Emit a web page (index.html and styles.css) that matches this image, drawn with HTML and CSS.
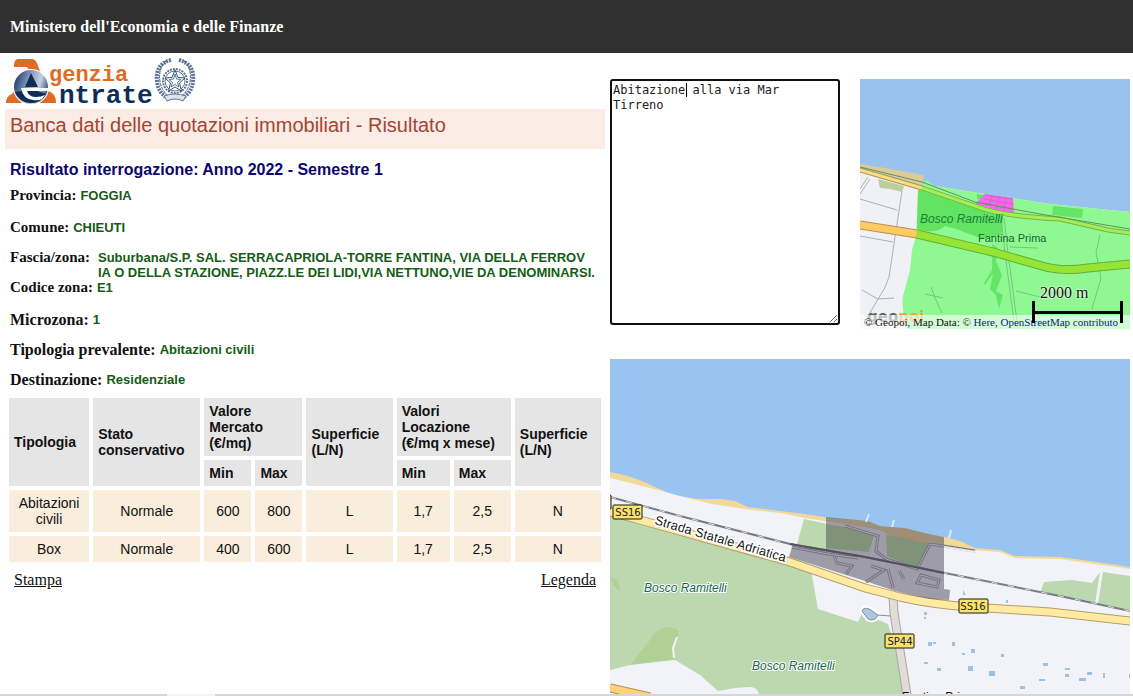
FILE: index.html
```html
<!DOCTYPE html>
<html lang="it">
<head>
    <meta charset="UTF-8">
    <meta name="viewport" content="width=device-width, initial-scale=1.0">
    <title>Banca dati delle quotazioni immobiliari - Risultato</title>
    <link rel="stylesheet" href="styles.css">
</head>
<body>
    <header class="top-bar">Ministero dell'Economia e delle Finanze</header>

    <main class="page">
        <section class="result">
            <svg class="logo" viewBox="5 55 195 54" role="img" aria-label="Agenzia Entrate">
                <defs>
                    <linearGradient id="ball" x1="0" y1="0.2" x2="1" y2="0.5">
                        <stop offset="0" stop-color="#173963"/>
                        <stop offset="0.4" stop-color="#7e95b5"/>
                        <stop offset="0.75" stop-color="#c5d1e0"/>
                        <stop offset="1" stop-color="#3d5c86"/>
                    </linearGradient>
                </defs>
                <path class="logo-orange" d="M18 59H32Q36 59 38 66L48 91Q56 93 56 103H40L30 71L27 67H14Q14 59 18 59ZM6 103Q6 96 12 94L18 86L22 103Z"/>
                <circle cx="31" cy="87" r="18" fill="#fff"/>
                <circle cx="31" cy="87" r="17" fill="url(#ball)"/>
                <path d="M15 92A17 17 0 0 0 46 94L38 91H22Z" fill="#0f2d57"/>
                <path d="M31 73L38 87H25Z" fill="#0f2d57"/>
                <path d="M21 88H48V91H27Q29 97 36 97Q41 97 45 95L42 99Q38 101 33 100Q23 99 21 88Z" fill="#fff"/>
                <text class="logo-agenzia" x="49" y="81">genzia</text>
                <text class="logo-entrate" x="59" y="103">ntrate</text>
                <g fill="none" stroke="#5c7694">
                    <circle cx="175" cy="81" r="12" stroke-width="2" stroke-dasharray="2 1"/>
                    <circle cx="175" cy="81" r="10"/>
                    <path d="M175 70L178 77.500L185 78L179.500 83L181.500 91L175 87L168.500 91L170.500 83L165 78L172 77.500Z" stroke="#344f72" fill="#fff"/>
                    <path d="M175 74L176.500 79L181 79.500L177.500 82.500L179 87L175 84.500L171 87L172.500 82.500L169 79.500L173.500 79Z"/>
                    <path d="M171 60Q155 64 157 81Q158 93 168 98M179 60Q195 64 193 81Q192 93 182 98" stroke-width="4" stroke-dasharray="2 1"/>
                    <path d="M166 61Q158 68 160 82Q162 92 171 98M184 61Q192 68 190 82Q188 92 179 98" stroke="#344f72" stroke-dasharray="3 1"/>
                    <path d="M164 96Q175 92 186 96L183 101Q175 97 167 101Z" fill="#dce4ed"/>
                </g>
            </svg>

            <h1 class="title">Banca dati delle quotazioni immobiliari - Risultato</h1>
            <h2 class="query">Risultato interrogazione: Anno 2022 - Semestre 1</h2>

            <dl class="details">
                <div class="detail"><dt>Provincia:</dt><dd>FOGGIA</dd></div>
                <div class="detail wide"><dt>Comune:</dt><dd>CHIEUTI</dd></div>
                <div class="detail zone">
                    <dt>Fascia/zona:</dt>
                    <dd>Suburbana/S.P. SAL. SERRACAPRIOLA-TORRE FANTINA, VIA DELLA FERROV<br>IA O DELLA STAZIONE, PIAZZ.LE DEI LIDI,VIA NETTUNO,VIE DA DENOMINARSI.</dd>
                </div>
                <div class="detail code"><dt>Codice zona:</dt><dd>E1</dd></div>
                <div class="detail large wide"><dt>Microzona:</dt><dd>1</dd></div>
                <div class="detail large"><dt>Tipologia prevalente:</dt><dd>Abitazioni civili</dd></div>
                <div class="detail large"><dt>Destinazione:</dt><dd>Residenziale</dd></div>
            </dl>

            <table class="quotes">
                <colgroup>
                    <col class="col-type"><col class="col-state">
                    <col class="col-sale"><col class="col-sale"><col class="col-area">
                    <col class="col-rent-min"><col class="col-rent-max"><col class="col-area">
                </colgroup>
                <thead>
                    <tr>
                        <th rowspan="2">Tipologia</th>
                        <th rowspan="2">Stato conservativo</th>
                        <th colspan="2">Valore<br>Mercato<br>(€/mq)</th>
                        <th rowspan="2">Superficie (L/N)</th>
                        <th colspan="2">Valori<br>Locazione<br>(€/mq x mese)</th>
                        <th rowspan="2">Superficie (L/N)</th>
                    </tr>
                    <tr>
                        <th>Min</th>
                        <th>Max</th>
                        <th>Min</th>
                        <th>Max</th>
                    </tr>
                </thead>
                <tbody>
                    <tr>
                        <td>Abitazioni civili</td>
                        <td>Normale</td>
                        <td>600</td>
                        <td>800</td>
                        <td>L</td>
                        <td>1,7</td>
                        <td>2,5</td>
                        <td>N</td>
                    </tr>
                    <tr>
                        <td>Box</td>
                        <td>Normale</td>
                        <td>400</td>
                        <td>600</td>
                        <td>L</td>
                        <td>1,7</td>
                        <td>2,5</td>
                        <td>N</td>
                    </tr>
                </tbody>
            </table>

            <nav class="links">
                <a href="#stampa">Stampa</a>
                <a href="#legenda">Legenda</a>
            </nav>
        </section>

        <section class="side">
            <div class="side-top">
                <div class="notes-box">
                    <textarea class="notes" aria-label="Note" spellcheck="false">Abitazione alla via Mar Tirreno</textarea>
                    <i class="caret"></i>
                </div>

                <div class="mini-map">
                    <svg viewBox="860 79 270 250" preserveAspectRatio="xMinYMin slice" aria-label="Mappa della zona">
                        <rect x="860" y="79" width="270" height="250" fill="#99c2ef"/>
                        <path d="M860 166L922 176V185L935 186L985 194L1050 204L1130 212V329H860Z" fill="#f0f1f6"/>
                        <path d="M860 164L885 168L924 175L922 189L860 171Z" fill="#dccb97"/>
                        <path d="M860 166L900 176L922 187L860 171Z" fill="#cbcfaa"/>
                        <path d="M878 179L904 186L902 192L890 189L880 188Z" fill="#bccf9b"/>
                        <path d="M924 183L926 180L935 186L985 194L1050 204L1130 212V329H908Q901 311 903 296L910 270L912 250L916 236L918 192Z" fill="#90f892"/>
                        <path d="M918 190L940 192L985 210L1003 215L1002 232Q998 239 980 238L956 229L945 226Q935 235 917 229Z" fill="#62e462"/>
                        <path d="M1053 206L1083 209L1082 218L1052 215ZM977 194L985 195L984 200L977 199Z" fill="#65e565"/>
                        <path d="M992 244L998 248L996 261L1002 275L996 291L1003 295L999 309L996 295L990 289L993 273L985 285L984 283L992 270Z" fill="#65e568"/>
                        <g fill="none" stroke="#a9b0b3">
                            <path d="M860 199L897 210M860 236L893 242M902 191L889 277Q886 288 878 299L862 290M878 299L894 298M878 299L867 318M870 179L860 194M868 177L860 189"/>
                            <path d="M1004 218L1008 253L1018 329M1001 218L1005 253L1015 329M1100 235L1096 253L1101 278L1092 309M1016 291L1040 297M1010 247L1038 248M931 287L935 298L942 313M925 294L943 298" stroke="#71c777"/>
                        </g>
                        <path d="M985 194L1013 198L1014 213L1000 211L975 204Z" fill="#ee6be5"/>
                        <path d="M985 195L1012 199M984 199L1013 204M982 203L1012 209M992 195L989 205M999 196L996 209M1006 198L1004 211" stroke="#d95fce" fill="none"/>
                        <path d="M860 170L922 188" fill="none" stroke="#a99254" stroke-width="5"/>
                        <path d="M860 170L922 188" fill="none" stroke="#f9de82" stroke-width="3"/>
                        <path d="M922 188L978 207Q1000 216 1060 219L1108 230L1130 233" fill="none" stroke="#6eb64b" stroke-width="5"/>
                        <path d="M922 188L978 207Q1000 216 1060 219L1108 230L1130 233" fill="none" stroke="#a8ec55" stroke-width="3"/>
                        <path d="M860 167L922 182L975 202L1040 214L1130 229" fill="none" stroke="#62935d"/>
                        <path d="M860 225L917 234" fill="none" stroke="#bb8c54" stroke-width="9"/>
                        <path d="M860 225L917 234" fill="none" stroke="#fccb62" stroke-width="7"/>
                        <path d="M917 234L993 252L1042 266Q1062 272 1088 268L1130 264" fill="none" stroke="#65ad38" stroke-width="9"/>
                        <path d="M917 234L993 252L1042 266Q1062 272 1088 268L1130 264" fill="none" stroke="#96e535" stroke-width="7"/>
                        <text class="mini-place wood" x="920" y="223">Bosco Ramitelli</text>
                        <text class="mini-place" x="978" y="242">Fantina Prima</text>
                        <text class="brand" x="867" y="322">geo<tspan class="brand-end">poi</tspan></text>
                    </svg>
                    <p class="credits">© Geopoi, Map Data: © <a href="#here">Here</a>, <a href="#osm">OpenStreetMap contributo</a></p>
                    <div class="scale"><span>2000 m</span><i class="scale-bar"></i></div>
                </div>
            </div>

            <svg class="map" viewBox="610 359 520 335" preserveAspectRatio="xMinYMin slice" aria-label="Mappa di dettaglio">
                <rect x="610" y="359" width="520" height="335" fill="#99c3f0"/>
                <path d="M610 472L620 474Q640 479 655 487L676 496L700 499L722 499L735 501L748 507L780 511L805 514L830 518L868 521L880 526L905 528L925 533L945 537L960 541L975 548L1000 550L1015 556L1060 557L1090 561L1130 567V694H610Z" fill="#f0d999"/>
                <path d="M610 478Q640 485 680 496L712 504L745 509L780 513L805 518L870 528L945 545L975 550L1000 552L1015 558L1060 559L1130 569V694H610Z" fill="#f2f3f8"/>

                <path d="M610 516L640 524L790 565L811 570L818 609L858 622L862 613L888 624L894 643L907 694H759Q757 687 750 687L735 688L718 691L700 675L675 660L630 665L610 670Z" fill="#bbd8ae"/>
                <path d="M630 665L648 643Q656 628 668 627Q681 628 678 635L673 649L675 659L643 663ZM610 577L617 580L621 592L613 585Z" fill="#b0d095"/>
                <path d="M674 658L673 648L677 637" fill="none" stroke="#f4f5ef" stroke-width="2"/>
                <path d="M804 519L827 524V550L797 544ZM1040 593L1044 582L1072 580L1092 583L1100 572L1095 604ZM1103 572L1130 576V611L1098 604Z" fill="#bbd8ae"/>

                <g fill="none">
                    <path d="M893 597L894 613L901 657L907 695" stroke="#aaa6a5" stroke-width="9"/>
                    <path d="M893 597L894 613L901 657L907 695" stroke="#e1dcd7" stroke-width="7"/>
                    <path d="M610 512L640 520L790 562L865 588L900 597Q930 604 970 607L1050 612L1130 621" stroke="#b69c6a" stroke-width="9"/>
                    <path d="M610 512L640 520L790 562L865 588L900 597Q930 604 970 607L1050 612L1130 621" stroke="#feeaa0" stroke-width="7"/>
                    <path d="M610 688L650 697" stroke="#b98d5b" stroke-width="9"/>
                    <path d="M610 688L650 697" stroke="#fdd27a" stroke-width="7"/>
                    <path d="M610 497L680 516L790 544L865 557L965 577L1060 596L1130 611" stroke="#787c84" stroke-width="2"/>
                    <path d="M610 497L680 516L790 544L865 557L965 577L1060 596L1130 611" stroke="#dcdfe5" stroke-dasharray="6 11"/>
                </g>

                <!-- centro abitato -->
                <path d="M826 517L868 521L880 526L905 528L925 533L944 537V589L950 590L949 600L930 599L895 591L862 580L789 557L792 547L826 549Z" fill="#514d5f" fill-opacity="0.52"/>
                <path d="M827 524L845 527L874 535L869 552L827 548ZM886 535L903 536L929 543L917 569L887 556Z" fill="#7f9379"/>
                <path d="M882 531L911 535L930 541L923 543L887 534Z" fill="#a58c70"/>
                <g fill="none" stroke="#77727f" stroke-width="3">
                    <path d="M845 526L878 536L876 551L886 559L917 569L930 544L975 551M792 547L828 554L858 558M834 556L837 563L852 566L846 574M871 566L884 570L866 582M888 569L893 588M921 575L939 580L937 587L917 583ZM899 571L904 579"/>
                </g>
                <g fill="none" stroke="#a8a4af">
                    <path d="M845 526L878 536L876 551L886 559L917 569L930 544L975 551M792 547L828 554L858 558M834 556L837 563L852 566L846 574M871 566L884 570L866 582M888 569L893 588M921 575L939 580L937 587L917 583ZM899 571L904 579"/>
                </g>
                <path d="M944 547L976 552" fill="none" stroke="#e9eaee" stroke-width="2"/>
                <path d="M790 544L865 557L915 567L944 573" fill="none" stroke="#54525f" stroke-width="2"/>
                <path d="M866 522L869 514M892 527L894 520M949 538L951 530" stroke="#d8edf4" stroke-width="2"/>

                <path d="M862 611Q864 606 871 610L878 615Q875 622 868 619Z" fill="#aac8df" stroke="#fff" stroke-width="5"/>
                <path d="M878 615L890 616M862 611Q864 606 871 610L878 615Q875 622 868 619Z" fill="#aac8df" stroke="#858b91"/>
                <path d="M924 612h3v3h-3zM924 617h2v2h-2zM928 642h4v4h-4zM933 642h3v2h-3zM952 642h3v4h-3zM962 653h3v2h-3zM971 649h4v4h-4zM1001 654h3v3h-3zM924 662h4v2h-4zM937 668h4v3h-4zM968 666h5v5h-5zM989 671h6v5h-6zM1020 686h5v3h-5zM1043 663h5v3h-5zM1039 679h6v2h-6zM1065 668h5v2h-5zM1065 674h4v3h-4zM1079 678h7v3h-7zM1087 672h5v3h-5zM1103 673h2v5h-2zM963 590l3 5h-3zM1006 600h2v3h-2zM1129 674h2v4h-2z" fill="#9dc2e1"/>

                <g class="place">
                    <text x="644" y="592">Bosco Ramitelli</text>
                    <text x="752" y="670">Bosco Ramitelli</text>
                </g>
                <path id="road" d="M654 524L805 568" fill="none"/>
                <text class="road-name"><textPath href="#road">Strada Statale Adriatica</textPath></text>
                <g fill="#fbe36b" stroke="#181815">
                    <rect x="606" y="495" width="5" height="14" rx="1"/>
                    <rect x="613" y="505" width="29" height="14" rx="1"/>
                    <rect x="959" y="599" width="29" height="14" rx="1"/>
                    <rect x="885" y="634" width="29" height="14" rx="1"/>
                </g>
                <g class="shield">
                    <text x="628" y="516">SS16</text>
                    <text x="973" y="610">SS16</text>
                    <text x="900" y="645">SP44</text>
                </g>
                <text class="town" x="902" y="701">Fantina Prima</text>
            </svg>
        </section>
    </main>

    <div class="scroll-track"><div class="scroll-thumb"></div></div>
</body>
</html>
```
FILE: styles.css
```css
* {
    margin: 0;
    padding: 0;
    box-sizing: border-box;
}

body {
    font-family: "Liberation Serif", "Times New Roman", serif;
    font-size: 16px;
    color: #111;
    background: #fff;
    height: 100vh;
    display: flex;
    flex-direction: column;
    overflow: hidden;
}

.top-bar {
    background: #303030;
    color: #fff;
    font-weight: bold;
    line-height: 19px;
    padding: 17px 10px;
}

.page {
    flex: 1;
    min-height: 0;
    display: grid;
    grid-template-columns: minmax(0, 600fr) minmax(0, 520fr);
    gap: 5px;
    padding: 0 3px 0 5px;
}

.result {
    padding-top: 2px;
}

.logo {
    display: block;
    width: 195px;
    height: 54px;
}

.logo-orange {
    fill: #df6c24;
}

.logo-agenzia,
.logo-entrate {
    font-family: "Liberation Mono", "Courier New", monospace;
    font-weight: bold;
}

.logo-agenzia {
    font-size: 22px;
    fill: #df6c24;
}

.logo-entrate {
    font-size: 26px;
    fill: #102d59;
}

.title {
    background: #fbece5;
    color: #a34535;
    font-family: "Liberation Sans", Arial, sans-serif;
    font-size: 20px;
    font-weight: normal;
    line-height: 24px;
    padding: 4px 5px 12px;
}

.query {
    color: #0b0670;
    font-family: "Liberation Sans", Arial, sans-serif;
    font-size: 16px;
    line-height: 20px;
    padding: 11px 5px 8px;
}

.details {
    display: flex;
    flex-direction: column;
    gap: 15px;
    padding: 0 5px 7px;
}

.detail {
    display: flex;
    gap: 4px;
    font-size: 15px;
    line-height: 15px;
}

.detail dt {
    font-weight: bold;
}

.detail dd {
    color: #145c14;
    font-family: "Liberation Sans", Arial, sans-serif;
    font-size: 13px;
    font-weight: bold;
}

.detail.large {
    font-size: 16px;
}

.detail.wide {
    padding-top: 2px;
}

.detail.zone {
    gap: 8px;
    white-space: nowrap;
}

.detail.code {
    margin-top: -15px;
}

.quotes {
    width: 100%;
    table-layout: fixed;
    border-spacing: 4px;
    font-family: "Liberation Sans", Arial, sans-serif;
    font-size: 14px;
    line-height: 16px;
}

.col-type { width: 80px; }
.col-state { width: 107px; }
.col-sale { width: 47px; }
.col-area { width: 86px; }
.col-rent-min { width: 53px; }
.col-rent-max { width: 57px; }

.quotes th {
    background: #e5e5e5;
    padding: 5px;
    text-align: left;
}

.quotes td {
    background: #f9eddc;
    padding: 5px;
    text-align: center;
}

.links {
    display: flex;
    justify-content: space-between;
    padding: 5px 9px;
    line-height: 18px;
}

.links a {
    color: #111;
}

.side {
    display: flex;
    flex-direction: column;
    gap: 30px;
    min-height: 0;
    padding-top: 26px;
}

.side-top {
    display: grid;
    grid-template-columns: 230fr 270fr;
    gap: 20px;
    align-items: start;
}

.notes-box {
    position: relative;
}

.notes {
    display: block;
    width: 100%;
    height: 246px;
    border: 2px solid #101010;
    border-radius: 3px;
    outline: none;
    padding: 2px 18px 2px 1px;
    color: #222;
    font-family: "DejaVu Sans Mono", monospace;
    font-size: 12px;
    line-height: 15px;
}

.caret {
    position: absolute;
    left: 76px;
    top: 4px;
    width: 1px;
    height: 14px;
    background: #000;
}

.mini-map {
    position: relative;
    height: 250px;
    overflow: hidden;
}

.mini-map svg {
    display: block;
    width: 100%;
    height: 100%;
}

.mini-place {
    font-family: "Liberation Sans", Arial, sans-serif;
    font-size: 11px;
    fill: #15652c;
}

.wood {
    font-size: 12px;
    font-style: italic;
    fill: #15803b;
}

.brand {
    font-family: "DejaVu Sans", sans-serif;
    font-size: 15px;
    font-weight: bold;
    fill: #5d6662;
}

.brand-end {
    fill: #e8a63c;
}

.credits {
    position: absolute;
    left: 0;
    right: 0;
    bottom: 0;
    padding-left: 4px;
    background: rgba(255, 255, 255, 0.6);
    font-size: 11px;
    line-height: 14px;
    white-space: nowrap;
}

.credits a {
    color: #1515a5;
    text-decoration: none;
}

.scale {
    position: absolute;
    right: 7px;
    bottom: 6px;
    width: 91px;
    font-size: 16px;
    line-height: 16px;
    text-shadow: 0 0 2px #fff, 0 0 2px #fff;
}

.scale span {
    display: block;
    padding-left: 8px;
}

.scale-bar {
    display: block;
    height: 22px;
    border: solid #000;
    border-width: 0 3px;
    background: linear-gradient(#000, #000) center / 100% 3px no-repeat;
}

.map {
    display: block;
    flex: 1;
    width: 100%;
    min-height: 0;
}

.place {
    font-family: "Liberation Sans", Arial, sans-serif;
    font-size: 12px;
    font-style: italic;
    fill: #17654b;
    stroke: #fff;
    stroke-width: 2px;
    paint-order: stroke;
}

.road-name {
    font-family: "Liberation Sans", Arial, sans-serif;
    font-size: 13px;
    fill: #151515;
    stroke: #fff;
    stroke-width: 3px;
    paint-order: stroke;
}

.shield {
    font-family: "DejaVu Sans", sans-serif;
    font-size: 10px;
    fill: #222;
    text-anchor: middle;
}

.town {
    font-family: "Liberation Sans", Arial, sans-serif;
    font-size: 12px;
    fill: #151515;
}

.scroll-track {
    height: 2px;
    background: #d6d6d6;
}

.scroll-thumb {
    width: 48px;
    height: 2px;
    margin-left: 167px;
    background: #f4f4f4;
}
```
